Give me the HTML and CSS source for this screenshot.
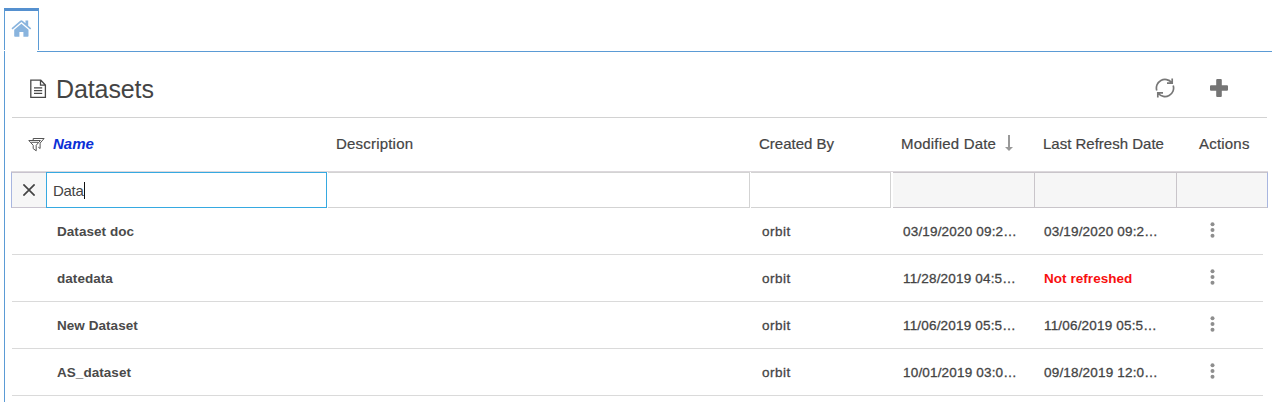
FILE: index.html
```html
<!DOCTYPE html>
<html lang="en">
<head>
<meta charset="utf-8">
<title>Datasets</title>
<link rel="stylesheet" href="styles.css">
</head>
<body>
<nav class="tabs">
  <div class="tab">
    <svg class="home" width="21" height="18" viewBox="0 0 21 18"><path d="M10.4 3.8 3.2 9.8V16a.8.8 0 0 0 .8.8h4.4V12h4v4.8h4.3a.8.8 0 0 0 .8-.8V9.8z"/><path d="M20.2 8.2 17.2 5.7V.4H14.5V3.2L11.6.8Q10.4-.1 9.2.8L.5 8.2l1 1.2 8.9-7.3 8.8 7.3z"/></svg>
  </div>
  <div class="tab-line"></div>
</nav>
<main class="panel">
  <header class="title-bar">
    <svg class="doc" width="17" height="20" viewBox="0 0 17 20"><path d="M.8 1.2h10l4.6 4.8v12.3H.8zM10.5 1.2v5h5M4 8.9h8.2M4 11.6h8.2M4 14.3h8.2"/></svg>
    <h1>Datasets</h1>
    <svg class="refresh" width="20" height="22" viewBox="0 0 20 22"><path d="M1.8 13.6A8.6 8.6 0 0 1 16.6 5.5M18.2 8.4A8.6 8.6 0 0 1 3.4 16.5M17.2 1.6V6.2H12M2.8 20.4V15.8H8"/></svg>
    <svg class="plus" width="18" height="18" viewBox="0 0 18 18"><path d="M7.2 0h3.6q1 0 1 1v5.2H17q1 0 1 1v3.6q0 1-1 1h-5.2V17q0 1-1 1H7.2q-1 0-1-1v-5.2H1q-1 0-1-1V7.2q0-1 1-1h5.2V1q0-1 1-1z"/></svg>
  </header>
  <div class="grid head">
    <div class="name-head"><svg class="funnel" width="17" height="15" viewBox="0 0 17 15"><path d="M.8 3.5h11.6L8.2 8.3v5.5L5.2 11.6V8.3zM3.2 5.3h6.8M5.2 3.3V1.5h10.9l-4 4.6v5.4l-1.8-1.3"/></svg><span class="sorted">Name</span></div>
    <div class="h-desc">Description</div>
    <div class="h-by">Created By</div>
    <div class="h-mod">Modified Date<svg class="arrow" width="8" height="17" viewBox="0 0 8 17"><path d="M3 0h2v12h3L4 16 0 12h3z"/></svg></div>
    <div class="h-last">Last Refresh Date</div>
    <div class="h-act">Actions</div>
  </div>
  <div class="filters">
    <div class="clear"><svg width="12" height="12" viewBox="0 0 12 12"><path d="M.4.4 11.6 11.6M11.6.4.4 11.6"/></svg></div>
    <div class="field active"><span>Data</span><i class="caret"></i></div>
    <div class="field desc"></div>
    <div class="field by"></div>
    <div class="field off"></div>
    <div class="field off"></div>
    <div class="field off last"></div>
  </div>
  <div class="grid row"><b>Dataset doc</b><span></span><span class="by-text">orbit</span><span>03/19/2020 09:2…</span><span>03/19/2020 09:2…</span><svg class="dots" width="5" height="16" viewBox="0 0 5 16"><circle cx="2.5" cy="2.3" r="2"/><circle cx="2.5" cy="8" r="2"/><circle cx="2.5" cy="13.8" r="2"/></svg></div>
  <div class="grid row"><b>datedata</b><span></span><span class="by-text">orbit</span><span>11/28/2019 04:5…</span><b class="alert">Not refreshed</b><svg class="dots" width="5" height="16" viewBox="0 0 5 16"><circle cx="2.5" cy="2.3" r="2"/><circle cx="2.5" cy="8" r="2"/><circle cx="2.5" cy="13.8" r="2"/></svg></div>
  <div class="grid row"><b>New Dataset</b><span></span><span class="by-text">orbit</span><span>11/06/2019 05:5…</span><span>11/06/2019 05:5…</span><svg class="dots" width="5" height="16" viewBox="0 0 5 16"><circle cx="2.5" cy="2.3" r="2"/><circle cx="2.5" cy="8" r="2"/><circle cx="2.5" cy="13.8" r="2"/></svg></div>
  <div class="grid row"><b>AS_dataset</b><span></span><span class="by-text">orbit</span><span>10/01/2019 03:0…</span><span>09/18/2019 12:0…</span><svg class="dots" width="5" height="16" viewBox="0 0 5 16"><circle cx="2.5" cy="2.3" r="2"/><circle cx="2.5" cy="8" r="2"/><circle cx="2.5" cy="13.8" r="2"/></svg></div>
</main>
</body>
</html>
```
FILE: styles.css
```css
* { box-sizing: border-box; }
body {
  margin: 0;
  height: 402px;
  overflow: hidden;
  padding: 8px 0 0 4px;
  background: #fff;
  color: #444;
  font-family: "Liberation Sans", Arial, sans-serif;
}
svg { display: block; flex: none; }
.tabs { display: flex; height: 43px; }
.tab {
  width: 35px;
  height: 42px;
  border: 1px solid #5b9bd5;
  border-top: 3px solid #5590cf;
  border-bottom: 0;
  padding: 9px 0 0 6px;
}
.home { fill: #89b4de; }
.panel {
  height: 351px;
  border-left: 1px solid #5b9bd5;
  background: linear-gradient(#5b9bd5, #5b9bd5) 32px 0 / 100% 1px no-repeat;
  padding-left: 7px;
}
.title-bar {
  display: flex;
  width: 1255px;
  height: 67px;
  border-bottom: 1px solid #d2d2d2;
  padding-left: 18px;
}
.doc { margin-top: 28px; fill: none; stroke: #484848; stroke-width: 1.3; }
.title-bar h1 {
  margin: 23px 0 0 9px;
  width: 1087px;
  font-size: 25px;
  line-height: 30px;
  font-weight: 400;
  letter-spacing: -.1px;
}
.refresh { margin: 26px 0 0 12px; fill: none; stroke: #777; stroke-width: 1.7; }
.plus { margin: 28px 0 0 35px; fill: #757575; }
.grid {
  display: grid;
  grid-template-columns: 324px 423px 142px 141px 155px 1fr;
  width: 1251px;
}
.head {
  height: 53px;
  font-size: 15px;
  line-height: 18px;
  padding-top: 17px;
  -webkit-text-stroke: .2px #444;
}
.head > div { white-space: nowrap; }
.name-head { display: flex; padding-left: 16px; }
.funnel { margin: 2px 8px 0 0; fill: none; stroke: #555; stroke-width: 1; }
.sorted { color: #0a2fd6; font-weight: 700; font-style: italic; -webkit-text-stroke: 0; }
.h-desc { letter-spacing: .2px; }
.h-mod { display: flex; letter-spacing: .2px; }
.h-last { padding-left: 1px; }
.h-act { letter-spacing: .2px; padding-left: 2px; }
.arrow { margin: 0 0 0 9px; fill: #999; }
.filters {
  display: flex;
  width: 1257px;
  height: 37px;
  margin-left: -1px;
  border-top: 1px solid #dcd8dc;
}
.clear {
  display: flex;
  align-items: center;
  justify-content: center;
  width: 35px;
  border: 1px solid #c8c3ce;
  border-left-color: #a8b6e0;
  border-right: 0;
  background: #f6f6f6;
}
.clear svg { fill: none; stroke: #444; stroke-width: 1.7; }
.field { border: 1px solid #d3d3d3; }
.active {
  display: flex;
  align-items: center;
  width: 281px;
  border-color: #36a9e1;
  padding-left: 6px;
  font-size: 15px;
  letter-spacing: -.3px;
}
.caret { width: 1px; height: 17px; background: #111; }
.desc { width: 422px; margin-left: 1px; border-left: 0; }
.by { width: 140px; margin-left: 1px; border-left: 0; }
.off { width: 142px; border-color: #c9c5ca; border-left: 0; background: #f6f6f6; }
.by + .off { margin-left: 2px; }
.last { width: 91px; border-right: 1px solid #a8b6e0; }
.row {
  height: 47px;
  padding-top: 15px;
  border-bottom: 1px solid #dadada;
  font-size: 13.5px;
  line-height: 18px;
  letter-spacing: .18px;
  white-space: nowrap;
  -webkit-text-stroke: .3px #444;
}
.row b {
  padding-left: 45px;
  font-size: 13.5px;
  letter-spacing: .05px;
  color: #4a4a4a;
  -webkit-text-stroke: 0;
}
.row .alert { padding-left: 2px; color: #f80f0f; }
.row span { padding-left: 2px; }
.row .by-text { padding-left: 3px; letter-spacing: .5px; }
.dots { margin: -1px 0 0 13px; fill: #8e8e8e; stroke: none; }
```
